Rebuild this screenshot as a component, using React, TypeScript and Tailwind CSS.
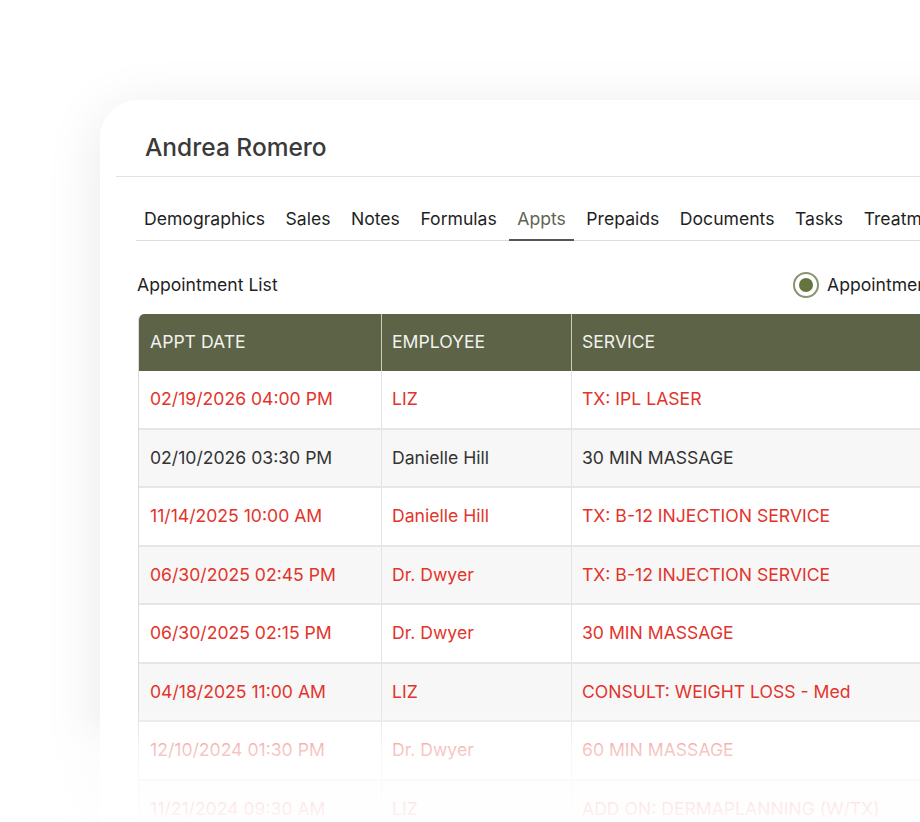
import React from "react";

const rows = [
  { d: "02/19/2026 04:00 PM", e: "LIZ", s: "TX: IPL LASER", red: true },
  { d: "02/10/2026 03:30 PM", e: "Danielle Hill", s: "30 MIN MASSAGE", red: false },
  { d: "11/14/2025 10:00 AM", e: "Danielle Hill", s: "TX: B-12 INJECTION SERVICE", red: true },
  { d: "06/30/2025 02:45 PM", e: "Dr. Dwyer", s: "TX: B-12 INJECTION SERVICE", red: true },
  { d: "06/30/2025 02:15 PM", e: "Dr. Dwyer", s: "30 MIN MASSAGE", red: true },
  { d: "04/18/2025 11:00 AM", e: "LIZ", s: "CONSULT: WEIGHT LOSS - Med", red: true },
  { d: "12/10/2024 01:30 PM", e: "Dr. Dwyer", s: "60 MIN MASSAGE", red: true },
  { d: "11/21/2024 09:30 AM", e: "LIZ", s: "ADD ON: DERMAPLANNING (W/TX)", red: true },
];

const tabs = ["Demographics", "Sales", "Notes", "Formulas", "Appts", "Prepaids", "Documents", "Tasks", "Treatments"];

export default function App() {
  return (
    <div
      className="relative h-[822px] w-[920px] overflow-hidden bg-white"
      style={{ fontFamily: "Inter, 'Noto Sans', sans-serif" }}
    >
      <div className="pl-[100px] pt-[100px]">
        <div className="w-[1000px] h-[760px] rounded-tl-[38px] bg-white shadow-[0_10px_60px_rgba(0,0,0,0.09)]">
          <div className="ml-[16px] border-b border-[#e2e2e2] pl-[29px] pb-[13px] pt-[31px]">
            <h1 className="text-[24.5px] leading-[32px] font-medium text-[#3a3a3a]">Andrea Romero</h1>
          </div>
          <div className="ml-[36px] mt-[18px] flex border-b border-[#dedede] whitespace-nowrap">
            {tabs.map((t) => (
              <div
                key={t}
                className={
                  t === "Appts"
                    ? "px-[8px] mr-[4.5px] pt-[12px] pb-[8px] text-[17.6px] leading-[24px] text-[#5f6552] border-b-2 border-[#555] -mb-px"
                    : "px-[8px] mr-[4.5px] pt-[12px] pb-[9px] text-[17.6px] leading-[24px] text-[#1f1f1f]"
                }
              >
                {t}
              </div>
            ))}
          </div>
          <div className="ml-[37px] mt-[30px] flex items-center h-[28px]">
            <div className="w-[656px] shrink-0 text-[17.6px] leading-[24px] text-[#1f1f1f]">Appointment List</div>
            <div className="flex items-center gap-[8px] shrink-0">
              <div className="w-[26px] h-[26px] rounded-full border-[2px] border-[#8a9470] flex items-center justify-center">
                <div className="w-[14px] h-[14px] rounded-full bg-[#66743d]"></div>
              </div>
              <span className="text-[17.6px] leading-[24px] text-[#1f1f1f] whitespace-nowrap">Appointments</span>
            </div>
          </div>
          <div className="ml-[38px] mt-[15px] w-[900px] rounded-tl-[6px] overflow-hidden border-l border-[#dcdcdc]">
            <div className="flex h-[57px] bg-[#5c6347] text-[17.6px] text-[#f2f2ee]">
              <div className="w-[243px] pl-[11px] flex items-center border-r border-[#c9cbbf]">APPT DATE</div>
              <div className="w-[190px] pl-[10px] flex items-center border-r border-[#c9cbbf]">EMPLOYEE</div>
              <div className="flex-1 pl-[10px] flex items-center">SERVICE</div>
            </div>
            {rows.map((r, i) => (
              <div
                key={i}
                className={
                  (i % 2 === 1 ? "bg-[#f7f7f7] " : "bg-white ") +
                  "flex h-[58.5px] text-[17.6px] border-b-2 border-[#e6e6e6] " +
                  (r.red ? "text-[#e2342b]" : "text-[#333333]")
                }
              >
                <div className="w-[243px] pl-[11px] flex items-center border-r border-[#e3e3e3]">{r.d}</div>
                <div className="w-[190px] pl-[10px] flex items-center border-r border-[#e3e3e3]">{r.e}</div>
                <div className="flex-1 pl-[10px] flex items-center whitespace-nowrap">{r.s}</div>
              </div>
            ))}
          </div>
        </div>
      </div>
      <div className="pointer-events-none absolute left-0 right-0 bottom-0 h-[114px] bg-gradient-to-b from-white/0 via-white/70 via-35% to-white/95 to-100%"></div>
    </div>
  );
}
